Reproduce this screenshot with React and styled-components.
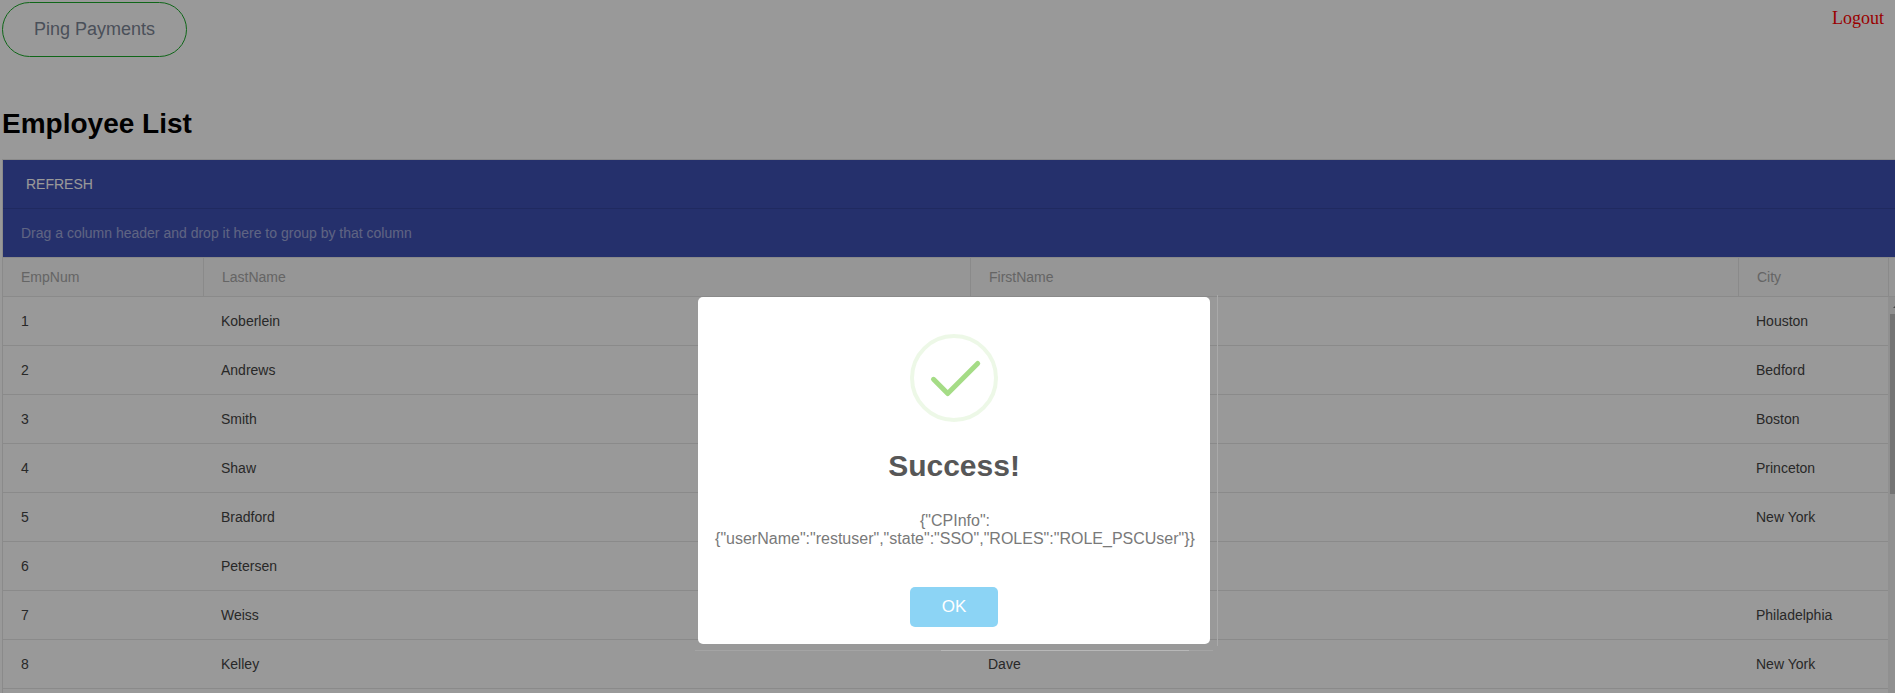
import React from "react";
import styled, { createGlobalStyle } from "styled-components";

const GlobalStyle = createGlobalStyle`
  html, body { margin: 0; height: 100%; overflow: hidden; background: #fff; }
  *, *::before, *::after { box-sizing: border-box; }
  #root { height: 100%; }
`;

const Page = styled.div`
  height: 693px;
  overflow: hidden;
  padding: 2px 0 0 2px;
  font-family: "Liberation Sans", Arial, sans-serif;
`;

const TopBar = styled.header`
  display: flex;
  justify-content: space-between;
  align-items: flex-start;
`;

const PingButton = styled.button`
  width: 185px;
  height: 55px;
  padding: 0 0 1px;
  border: 1px solid #1aab29;
  border-radius: 28px;
  background: transparent;
  color: #7c8595;
  font: 18px "Liberation Sans", Arial, sans-serif;
`;

const Logout = styled.a`
  margin: 6px 11px 0 0;
  color: #f00;
  font: 18px/20px "Liberation Serif", "Times New Roman", serif;
`;

const Heading = styled.h1`
  margin: 51px 0 19px;
  font-size: 28px;
  line-height: 32px;
  font-weight: 700;
  color: #000;
`;

const Grid = styled.section`
  border: solid #e6e6e6;
  border-width: 1px 0 0 1px;
  font-size: 14px;
  color: #444;
`;

const Toolbar = styled.div`
  display: flex;
  align-items: center;
  height: 49px;
  padding-left: 23px;
  background: #3f51b5;
  border-bottom: 1px solid #3646a0;
  color: #fff;
`;

const GroupPanel = styled(Toolbar)`
  height: 48px;
  padding-left: 18px;
  border-bottom: 0;
  color: rgba(255, 255, 255, 0.5);
`;

const HeaderRow = styled.div`
  display: grid;
  grid-template-columns: 200px 767px 768px 150px 1fr;
  height: 40px;
  border: solid #e6e6e6;
  border-width: 1px 0;
  background: #fafafa;
  color: #a8a8a8;
`;

const HeaderCell = styled.div`
  display: flex;
  align-items: center;
  padding-left: 18px;
  border-left: ${(p) => (p.$first ? "0" : "1px solid #e6e6e6")};
`;

const Body = styled.div`
  display: grid;
  grid-template-columns: 1885px 1fr;
`;

const Row = styled.div`
  display: grid;
  grid-template-columns: 200px 767px 768px 150px;
  height: 49px;
  border-bottom: 1px solid #e6e6e6;
`;

const Cell = styled.div`
  display: flex;
  align-items: center;
  padding-left: 18px;
`;

const ScrollTrack = styled.div`
  overflow: hidden;
  padding-left: 2px;
  background: #f1f1f1;
`;

const ScrollArrow = styled.svg`
  display: block;
  width: 13px;
  height: 17px;
`;

const ScrollThumb = styled.div`
  height: 180px;
  background: #c1c1c1;
`;

const Overlay = styled.div`
  position: fixed;
  inset: 0;
  display: flex;
  justify-content: center;
  align-items: flex-start;
  padding: 297px 0 0 13px;
  background: rgba(0, 0, 0, 0.4);
`;

const Modal = styled.div`
  position: relative;
  display: flex;
  flex-direction: column;
  align-items: center;
  width: 512px;
  height: 347px;
  padding-top: 37px;
  border-radius: 5px;
  background: #fff;
  font-family: "Liberation Sans", Arial, sans-serif;
  text-align: center;
`;

const BottomEdge = styled.div`
  position: absolute;
  left: -3px;
  top: 353px;
  width: 518px;
  height: 1px;
  background: linear-gradient(to right, #a4a4a4 246px, #b8b8b8 246px, #b8b8b8 494px, #a4a4a4 494px);
`;

const RightEdge = styled.div`
  position: absolute;
  left: 519px;
  top: -2px;
  width: 1px;
  height: 351px;
  background: #a9a9a9;
`;

const SuccessIcon = styled.svg`
  width: 88px;
  height: 88px;
`;

const Title = styled.h2`
  margin: 24px 0 0;
  color: #575757;
  font-size: 30px;
  line-height: 40px;
  font-weight: 600;
`;

const Message = styled.p`
  margin: 26px 0 0;
  padding-left: 2px;
  color: #797979;
  font-size: 16px;
  line-height: 18px;
`;

const OkButton = styled.button`
  width: 88px;
  height: 40px;
  margin-top: 39px;
  padding: 0 0 1px;
  border: 0;
  border-radius: 5px;
  background: #8cd4f5;
  color: #fff;
  font: 17px "Liberation Sans", Arial, sans-serif;
`;

const employees = [
  ["1", "Koberlein", "", "Houston"],
  ["2", "Andrews", "", "Bedford"],
  ["3", "Smith", "", "Boston"],
  ["4", "Shaw", "", "Princeton"],
  ["5", "Bradford", "", "New York"],
  ["6", "Petersen", "", ""],
  ["7", "Weiss", "", "Philadelphia"],
  ["8", "Kelley", "Dave", "New York"],
  ["", "", "", ""],
];

const columns = ["EmpNum", "LastName", "FirstName", "City", ""];

export default function App() {
  return (
    <>
      <GlobalStyle />
      <Page>
        <TopBar>
          <PingButton>Ping Payments</PingButton>
          <Logout>Logout</Logout>
        </TopBar>
        <Heading>Employee List</Heading>
        <Grid>
          <Toolbar>REFRESH</Toolbar>
          <GroupPanel>Drag a column header and drop it here to group by that column</GroupPanel>
          <HeaderRow>
            {columns.map((name, i) => (
              <HeaderCell key={i} $first={i === 0}>{name}</HeaderCell>
            ))}
          </HeaderRow>
          <Body>
            <div>
              {employees.map((row, i) => (
                <Row key={i}>
                  {row.map((value, j) => <Cell key={j}>{value}</Cell>)}
                </Row>
              ))}
            </div>
            <ScrollTrack>
              <ScrollArrow viewBox="0 0 13 17">
                <path d="M3 11 L6.5 7.5 L10 11 Z" fill="#7a7a7a" />
              </ScrollArrow>
              <ScrollThumb />
            </ScrollTrack>
          </Body>
        </Grid>
      </Page>
      <Overlay>
        <Modal>
          <BottomEdge />
          <RightEdge />
          <SuccessIcon viewBox="0 0 88 88" fill="none">
            <circle cx="44" cy="44" r="42" stroke="#a5dc86" strokeOpacity="0.2" strokeWidth="4" />
            <path d="M23.5 45.3 L37.7 59.5 L67.7 29.5" stroke="#a5dc86" strokeWidth="5" strokeLinecap="round" strokeLinejoin="round" />
          </SuccessIcon>
          <Title>Success!</Title>
          <Message>
            {'{"CPInfo":'}
            <br />
            {'{"userName":"restuser","state":"SSO","ROLES":"ROLE_PSCUser"}}'}
          </Message>
          <OkButton>OK</OkButton>
        </Modal>
      </Overlay>
    </>
  );
}
